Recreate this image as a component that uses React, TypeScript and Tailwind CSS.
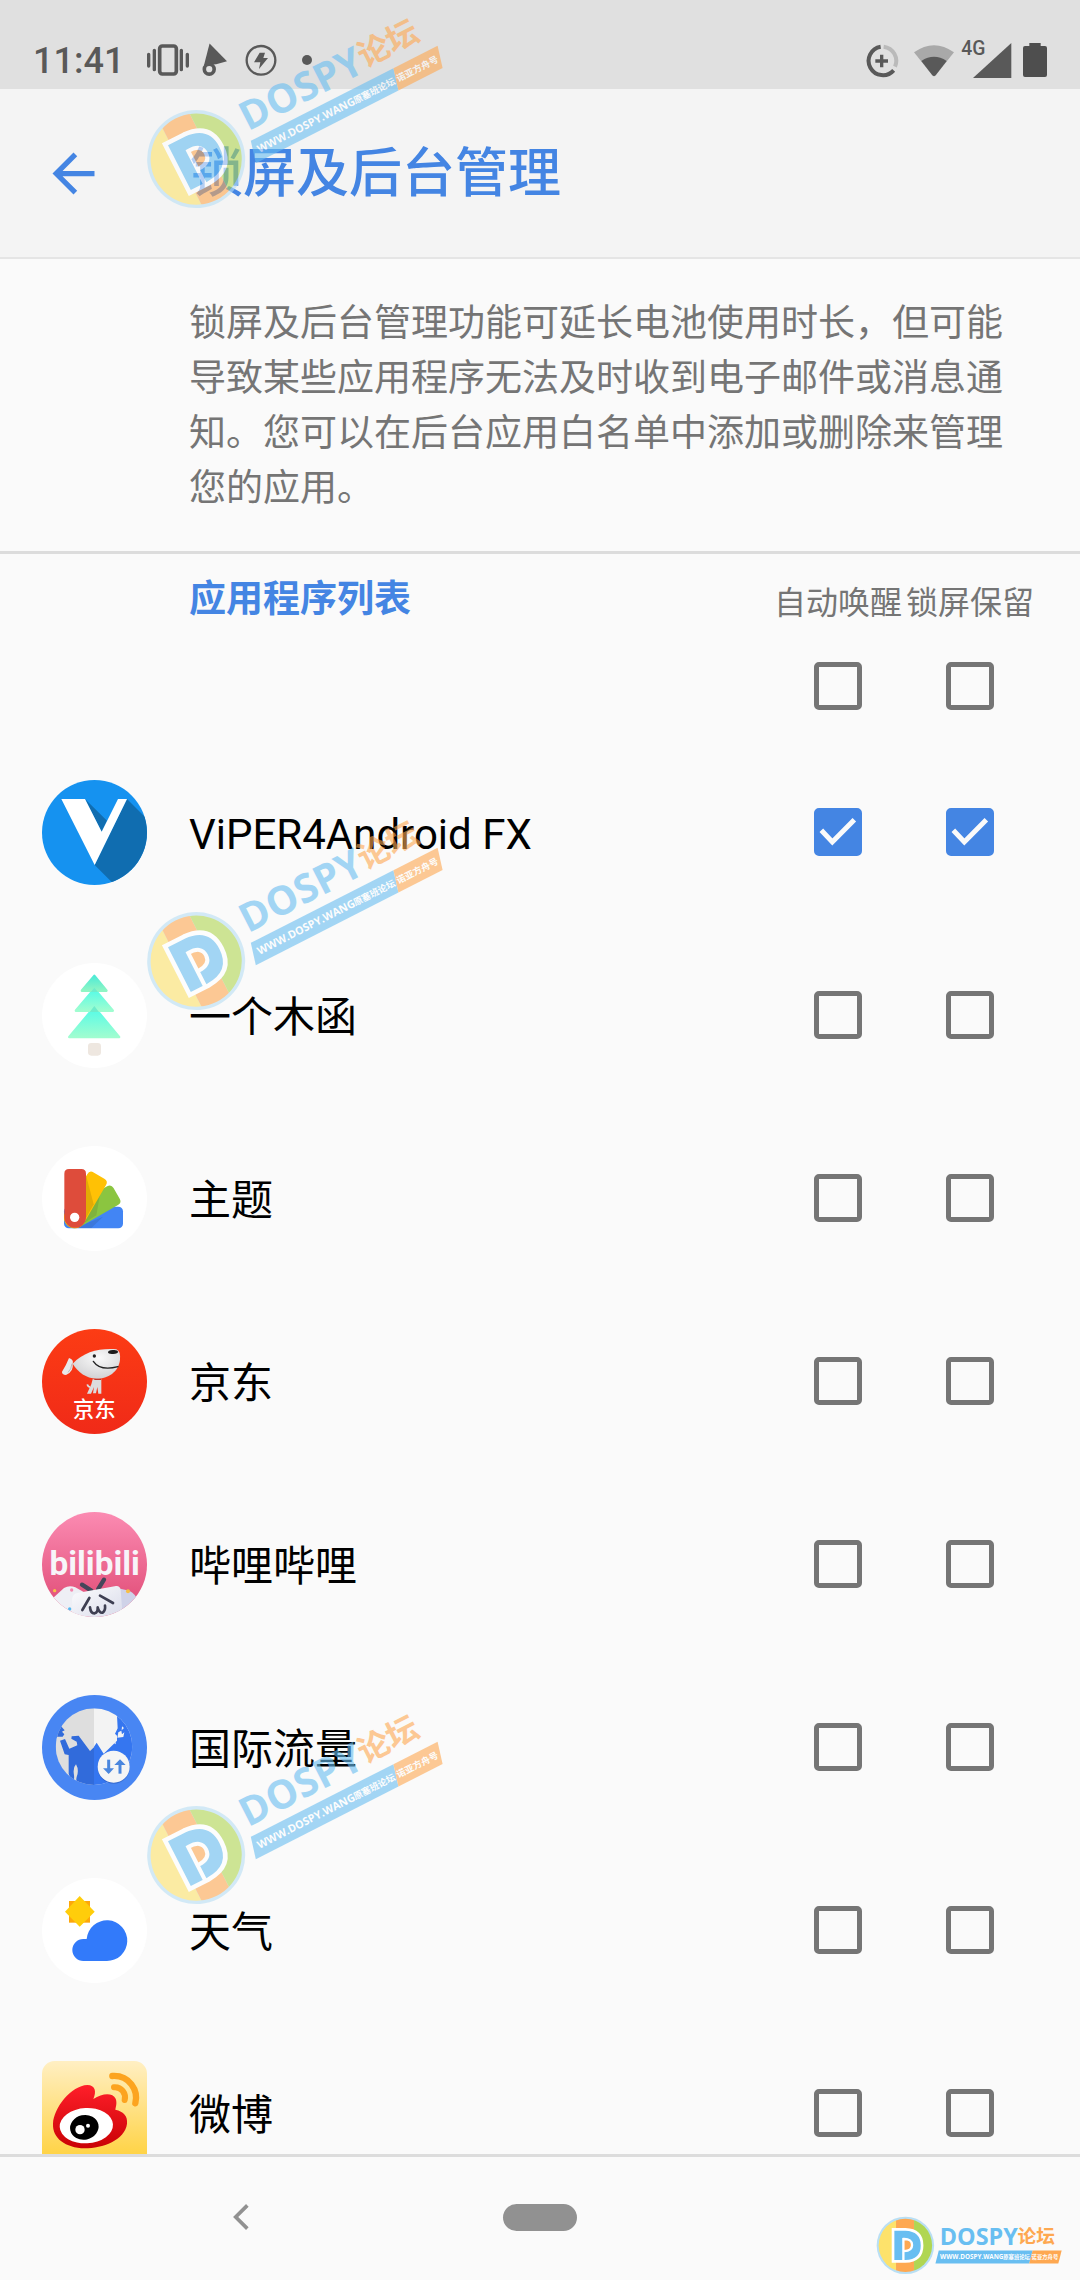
import { useState, type ReactNode } from "react";

// ── アプリアイコン（315 x 315 の座標で描く）──
function IconFrame({ children }: { children: ReactNode }) {
  return (
    <svg viewBox="0 0 315 315" className="block size-[105px] shrink-0" aria-hidden="true">
      {children}
    </svg>
  );
}

function ViperIcon() {
  return (
    <IconFrame>
      <clipPath id="viper-clip">
        <circle cx="157.5" cy="157.5" r="157.5" />
      </clipPath>
      <g clipPath="url(#viper-clip)">
        <rect width="315" height="315" fill="#1592f0" />
        <path d="M129 57 195 122 179 155ZM255 57 330 132V330H233L158 255Z" fill="#106db0" />
        <path d="M58 57H129L179 155 228 57H255L158 255Z" fill="#fff" />
      </g>
    </IconFrame>
  );
}

function TreeIcon() {
  return (
    <IconFrame>
      <defs>
        <linearGradient id="tree-a" x1="0" y1="0" x2="0" y2="1">
          <stop offset="0" stopColor="#4eebd6" />
          <stop offset="1" stopColor="#8ff5c4" />
        </linearGradient>
        <linearGradient id="tree-b" x1="0" y1="0" x2="0" y2="1">
          <stop offset="0" stopColor="#52fbe8" />
          <stop offset="1" stopColor="#a0fdd0" />
        </linearGradient>
      </defs>
      <circle cx="157.5" cy="157.5" r="157.5" fill="#fff" />
      <g strokeWidth="8" strokeLinejoin="round">
        <path d="M157 133 231 222H82Z" fill="url(#tree-b)" stroke="url(#tree-b)" />
        <path d="M157 78 212 143H102Z" fill="url(#tree-b)" stroke="url(#tree-b)" />
        <path d="M157 39 193 83H120Z" fill="url(#tree-a)" stroke="url(#tree-a)" />
      </g>
      <path d="M157 129 171 147H143ZM157 74 168 87H146Z" fill="#6eeccb" />
      <rect x="138" y="240" width="39" height="38" rx="10" fill="#eee7e0" />
    </IconFrame>
  );
}

function ThemeIcon() {
  return (
    <IconFrame>
      <circle cx="157.5" cy="157.5" r="157.5" fill="#fff" />
      <rect x="66" y="69" width="65" height="177" rx="14" fill="#4285f4" transform="rotate(90 98 214)" />
      <path d="M183 212 148 246H98Z" fill="#3c78db" />
      <path d="M66 83q0-14 14-14h37q14 0 14 14V214a32 32 0 0 1-65 0Z" fill="#8bc540" transform="rotate(60 98 214)" />
      <path d="M175 140 163 208 116 238Z" fill="#7fb33c" />
      <path d="M66 83q0-14 14-14h37q14 0 14 14V214a32 32 0 0 1-65 0Z" fill="#ffc105" transform="rotate(30 98 214)" />
      <path d="M132 88 155 175 122 233Z" fill="#e3ab05" />
      <path d="M67 83q0-14 14-14h37q14 0 14 14V213a32 32 0 0 1-65 0Z" fill="#de4c3b" />
      <circle cx="98" cy="214" r="14" fill="#fff" />
    </IconFrame>
  );
}

function JdIcon() {
  return (
    <IconFrame>
      <defs>
        <linearGradient id="jd-bg" x1="0" y1="0" x2="0" y2="1">
          <stop offset="0" stopColor="#fc3c14" />
          <stop offset="1" stopColor="#f02a18" />
        </linearGradient>
        <radialGradient id="jd-head" cx=".55" cy=".3" r=".75">
          <stop offset="0" stopColor="#fafafa" />
          <stop offset="1" stopColor="#cfcfd1" />
        </radialGradient>
      </defs>
      <circle cx="157.5" cy="157.5" r="157.5" fill="url(#jd-bg)" />
      <path d="M139 168q6 8 4 13M152 151h26v43h-9l-3-20-4 19h-9l3-19-9 20h-12l13-28Z" fill="#dcdcde" />
      <path d="M136 166q1 7 8 8" stroke="#dcdcde" strokeWidth="5" fill="none" />
      <path d="M92 104C125 68 175 57 223 61Q236 66 234 92C230 130 195 150 163 149 132 147 109 131 92 104Z" fill="url(#jd-head)" />
      <path d="M81 87Q96 92 92 104 96 127 72 138 59 136 60 128 72 110 81 87Z" fill="#e8e8ea" />
      <path d="M90 104Q88 122 78 130" stroke="#bdbdbf" strokeWidth="3" fill="none" />
      <ellipse cx="213" cy="69" rx="15" ry="6" fill="#1c1a1a" transform="rotate(-4 213 69)" />
      <circle cx="157" cy="81" r="5" fill="#222" />
      <path d="M154 97Q174 127 228 113" stroke="#222" strokeWidth="4" strokeLinecap="round" fill="none" />
      <path d="M157 151h20" stroke="#b51d13" strokeWidth="3" />
      <text x="157" y="263" textAnchor="middle" fontSize="64" fill="#fff" className="font-['Noto_Sans_CJK_SC',sans-serif] font-medium">
        京东
      </text>
    </IconFrame>
  );
}

function BilibiliIcon() {
  return (
    <IconFrame>
      <defs>
        <linearGradient id="bili-bg" x1="0" y1="0" x2="0" y2="1">
          <stop offset="0" stopColor="#fb8bb2" />
          <stop offset=".8" stopColor="#e4557f" />
        </linearGradient>
        <linearGradient id="bili-tv" x1="0" y1="0" x2="1" y2="1">
          <stop offset="0" stopColor="#fdfdfe" />
          <stop offset="1" stopColor="#d9dbea" />
        </linearGradient>
        <clipPath id="bili-clip">
          <circle cx="157.5" cy="157.5" r="157.5" />
        </clipPath>
      </defs>
      <g clipPath="url(#bili-clip)">
        <rect width="315" height="315" fill="url(#bili-bg)" />
        <path d="M20 270 66 228Q82 218 100 226L125 240V315H20Z" fill="#eeeff5" />
        <path d="M225 228 262 236Q282 246 290 270L250 315H225Z" fill="#cfd2e8" />
        <g stroke="#45465a" strokeWidth="13" strokeLinecap="round">
          <path d="M120 218 148 236" />
          <path d="M186 203 168 232" />
        </g>
        <path d="M90 262Q92 246 106 243L222 222Q234 221 236 234L242 315H92Z" fill="url(#bili-tv)" />
        <g stroke="#3e3f52" strokeWidth="8" strokeLinecap="round" strokeLinejoin="round" fill="none">
          <path d="M142 258 121 294M174 251 213 273" />
          <path d="M144 286Q146 305 158 304 168 301 167 286 172 304 182 302 191 296 189 281" />
        </g>
        <circle cx="38" cy="236" r="5" fill="#f6bf45" />
        <circle cx="89" cy="234" r="5" fill="#f58ab0" />
        <circle cx="258" cy="238" r="6" fill="#f6bf45" />
        <circle cx="83" cy="291" r="5" fill="#56b7ee" />
        <text x="158" y="190" textAnchor="middle" fontSize="100" fill="#f7f5f9" className="font-['Liberation_Sans_Narrow',Roboto,sans-serif] font-bold">
          bilibili
        </text>
      </g>
    </IconFrame>
  );
}

function RoamingIcon() {
  return (
    <IconFrame>
      <defs>
        <clipPath id="roam-left">
          <path d="M156 40A115 115 0 0 0 156 270Z" />
        </clipPath>
        <clipPath id="roam-right">
          <path d="M156 40A115 115 0 0 1 156 270Z" />
        </clipPath>
      </defs>
      <circle cx="157.5" cy="157.5" r="157.5" fill="#4886f3" />
      <g clipPath="url(#roam-left)">
        <rect width="315" height="315" fill="#dedede" />
        <path d="M54 137 69 132 82 161 106 151 104 140 88 131 89 124 110 122 144 168 156 157V272H110Q100 262 104 246 112 225 102 208 92 218 96 240 98 258 90 262L80 236V180L68 178Z" fill="#316bdb" />
        <path d="M56 92 68 106 60 110 67 118 62 125H42V92Z" fill="#316bdb" />
      </g>
      <g clipPath="url(#roam-right)">
        <rect width="315" height="315" fill="#f3f3f3" />
        <path d="M225 62H290V280H156V155L164 143 185 176 225 137V122L219 116 227 100Z" fill="#3576f0" />
        <path d="M240 94 246 99 239 106ZM229 112 238 107 240 118 247 112 244 126 226 128Z" fill="#f3f3f3" />
        <path d="M215 143 221 141 221 148Z" fill="#f3f3f3" />
      </g>
      <circle cx="215" cy="218" r="48" fill="#1f4ba8" opacity=".45" />
      <circle cx="215" cy="215" r="48" fill="#f5f5f5" />
      <g stroke="#4a86de" strokeWidth="9" fill="none">
        <path d="M200 194V232" />
        <path d="M234 236V198" />
      </g>
      <path d="M183 220H216L200 237ZM217 210H251L234 193Z" fill="#4a86de" />
    </IconFrame>
  );
}

function WeatherIcon() {
  return (
    <IconFrame>
      <circle cx="157.5" cy="157.5" r="157.5" fill="#fff" />
      <rect x="81" y="69" width="63" height="65" fill="#fda70c" />
      <path d="M113 54 158 101 113 146 69 101Z" fill="#ffcd0b" />
      <path d="M124 183H134A61 61 0 1 1 194 249H124A33 33 0 0 1 124 183Z" fill="#327afa" />
    </IconFrame>
  );
}

function WeiboIcon() {
  return (
    <IconFrame>
      <defs>
        <linearGradient id="wb-bg" x1="0" y1="0" x2="0" y2="1">
          <stop offset="0" stopColor="#ffefc3" />
          <stop offset=".9" stopColor="#ffd345" />
        </linearGradient>
        <linearGradient id="wb-red" x1="0" y1="0" x2="0" y2="1">
          <stop offset="0" stopColor="#ff1f2a" />
          <stop offset="1" stopColor="#c90205" />
        </linearGradient>
      </defs>
      <rect width="315" height="315" rx="38" fill="url(#wb-bg)" />
      <path
        d="M33 188C35 140 88 74 136 72 160 72 164 92 154 114 182 96 212 95 221 113 226 126 221 138 220 146 246 152 257 165 255 188 249 237 182 262 128 262 70 260 31 232 33 188Z"
        fill="url(#wb-red)"
      />
      <ellipse cx="133" cy="194" rx="80" ry="53" fill="#fff" transform="rotate(-3 133 194)" />
      <ellipse cx="127" cy="199" rx="43" ry="37" fill="#000" transform="rotate(-12 127 199)" />
      <circle cx="114" cy="206" r="14" fill="#fff" />
      <circle cx="138" cy="194" r="6" fill="#fff" />
      <g stroke="#fca420" fill="none" strokeLinecap="round">
        <path d="M211 45C262 42 290 88 280 127" strokeWidth="19" />
        <path d="M216 79C238 77 253 97 248 117" strokeWidth="18" />
      </g>
    </IconFrame>
  );
}

// ── ステータスバー ──
function StatusBar() {
  return (
    <div className="flex h-[89px] shrink-0 items-end justify-between bg-[#e0e0e0] px-[33px] pb-[11px] text-[#595959]">
      <div className="flex items-center">
        <span className="mr-[23px] pt-[2px] text-[36px] leading-[34px] font-medium">11:41</span>
        <svg viewBox="0 0 126 102" className="mr-[13px] h-[34px] w-[42px]" aria-label="振动">
          <rect x="38" y="9" width="50" height="84" rx="8" fill="none" stroke="currentColor" strokeWidth="11" />
          <path d="M5 34V69M22 22V80M103 22V80M121 34V69" stroke="currentColor" strokeWidth="10" strokeLinecap="round" fill="none" />
        </svg>
        <svg viewBox="0 0 76 102" className="mr-[18px] h-[34px] w-[25px]" aria-hidden="true">
          <path d="M23 1 76 55 43 64 6 67Z" fill="currentColor" />
          <circle cx="22" cy="79" r="15" fill="#e0e0e0" stroke="currentColor" strokeWidth="11" />
        </svg>
        <svg viewBox="0 0 96 102" className="mr-[25px] h-[34px] w-[32px]" aria-hidden="true">
          <circle cx="48" cy="52" r="43" fill="none" stroke="currentColor" strokeWidth="7" />
          <path d="M44 29H60L55 45H69L42 78 46 58H27Z" fill="currentColor" />
        </svg>
        <span className="size-[10px] rounded-full bg-current" />
      </div>
      <div className="flex items-end">
        <svg viewBox="0 0 102 102" className="mr-[15px] size-[34px]" aria-label="流量节省">
          <g fill="none" strokeWidth="12">
            <path d="M56 8A43 43 0 0 1 90 68" stroke="#bababa" />
            <path d="M47 8A43 43 0 1 0 86 79" stroke="currentColor" />
          </g>
          <path d="M50 32V70M31 51H69" stroke="currentColor" strokeWidth="10" />
        </svg>
        <svg viewBox="0 0 120 102" className="mr-[7px] h-[34px] w-[40px]" aria-label="Wi-Fi">
          <path d="M0 25Q60-18 120 25L65 94Q60 99 55 94Z" fill="#a9a9a9" />
          <path d="M22 51Q60 26 98 51L65 94Q60 99 55 94Z" fill="currentColor" />
        </svg>
        <svg viewBox="0 0 153 135" className="mr-[11px] h-[45px] w-[51px]" aria-label="4G 信号">
          <path d="M151 30V135H36Z" fill="currentColor" />
          <text x="1" y="67" fontSize="58" fill="currentColor" className="font-[Roboto,sans-serif] font-medium">
            4G
          </text>
        </svg>
        <svg viewBox="0 0 72 102" className="mb-px h-[34px] w-[24px]" aria-label="电池">
          <path d="M19 0H53V9H66Q72 9 72 15V96Q72 102 66 102H6Q0 102 0 96V15Q0 9 6 9H19Z" fill="#4e4e4e" />
        </svg>
      </div>
    </div>
  );
}

// ── 論壇ロゴ ──
function ForumLogo({ id, className }: { id: string; className: string }) {
  return (
    <svg viewBox="0 0 560 175" className={`pointer-events-none absolute overflow-visible ${className}`} aria-hidden="true">
      <clipPath id={id}>
        <circle cx="88" cy="88" r="80" />
      </clipPath>
      <circle cx="88" cy="88" r="86" fill="#b9dff4" />
      <g clipPath={`url(#${id})`}>
        <rect width="60" height="175" fill="#fde26b" />
        <rect x="60" width="54" height="175" fill="#fea851" />
        <rect x="114" width="61" height="175" fill="#b0d652" />
      </g>
      <path d="M51 40H88Q138 42 138 88 138 134 88 136H51Z" fill="#68bef1" stroke="#fff" strokeWidth="8" />
      <path d="M82 71H84Q106 72 106 87 106 102 86 103H82Z" fill="#fea851" />
      <path d="M82 136V69Q108 68 108 87 108 105 84 105" fill="none" stroke="#fff" strokeWidth="7" />
      <text x="191" y="86" fontSize="70" fill="#68bef1" className="font-['Open_Sans',sans-serif] font-bold">
        DOSPY
      </text>
      <text x="424" y="80" fontSize="56" fill="#fea851" className="font-['Noto_Sans_CJK_SC',sans-serif] font-bold">
        论坛
      </text>
      <path d="M188 103H469L459 142H178Z" fill="#68bef1" />
      <path d="M469 103H556L546 142H459Z" fill="#fea851" />
      <g fill="#fff" className="font-['Open_Sans','Noto_Sans_CJK_SC',sans-serif] font-bold">
        <text x="192" y="129" fontSize="19">WWW.DOSPY.WANG</text>
        <text x="381" y="129" fontSize="16">原塞班论坛</text>
        <text x="466" y="129" fontSize="16">诺亚方舟号</text>
      </g>
    </svg>
  );
}

function CheckBox({ label, checked, onChange }: { label: string; checked: boolean; onChange: () => void }) {
  return (
    <label className="grid place-items-center">
      <input
        type="checkbox"
        aria-label={label}
        checked={checked}
        onChange={onChange}
        className="peer col-start-1 row-start-1 size-12 appearance-none rounded-[5px] border-[5px] border-[#757575] checked:border-[#4485e3] checked:bg-[#4485e3]"
      />
      <svg viewBox="0 0 144 144" className="invisible col-start-1 row-start-1 size-12 peer-checked:visible" aria-hidden="true">
        <path d="M22 67 55 102 121 35" fill="none" stroke="#fafafa" strokeWidth="15" />
      </svg>
    </label>
  );
}

type AppItem = { name: string; icon: ReactNode; wake: boolean; keep: boolean };

const APPS: AppItem[] = [
  { name: "ViPER4Android FX", icon: <ViperIcon />, wake: true, keep: true },
  { name: "一个木函", icon: <TreeIcon />, wake: false, keep: false },
  { name: "主题", icon: <ThemeIcon />, wake: false, keep: false },
  { name: "京东", icon: <JdIcon />, wake: false, keep: false },
  { name: "哔哩哔哩", icon: <BilibiliIcon />, wake: false, keep: false },
  { name: "国际流量", icon: <RoamingIcon />, wake: false, keep: false },
  { name: "天气", icon: <WeatherIcon />, wake: false, keep: false },
  { name: "微博", icon: <WeiboIcon />, wake: false, keep: false },
];

type Column = "wake" | "keep";
const COLUMNS: { key: Column; label: string }[] = [
  { key: "wake", label: "自动唤醒" },
  { key: "keep", label: "锁屏保留" },
];

export default function App() {
  const [apps, setApps] = useState(APPS);

  const toggle = (i: number, key: Column) =>
    setApps((list) => list.map((a, n) => (n === i ? { ...a, [key]: !a[key] } : a)));

  const toggleAll = (key: Column) =>
    setApps((list) => {
      const next = !list.every((a) => a[key]);
      return list.map((a) => ({ ...a, [key]: next }));
    });

  return (
    <div className="relative flex h-screen flex-col overflow-hidden bg-[#fafafa] font-[Roboto,'Noto_Sans_CJK_SC',sans-serif]">
      <StatusBar />

      {/* 标题栏 */}
      <header className="flex h-[170px] shrink-0 items-center border-b-2 border-[#e5e5e5] bg-[#f4f4f4] pl-[42px] text-[#4485e3]">
        <button type="button" aria-label="返回" className="mr-[85px]">
          <svg viewBox="0 0 24 24" className="size-[63px]" aria-hidden="true">
            <path d="M20 11H7.83l5.59-5.59L12 4l-8 8 8 8 1.41-1.41L7.83 13H20v-2z" fill="currentColor" />
          </svg>
        </button>
        <h1 className="pt-[2px] text-[53px] leading-[64px] font-medium">锁屏及后台管理</h1>
      </header>

      <p className="shrink-0 border-b-[3px] border-[#dcdcdc] pt-[37px] pr-[70px] pb-[35px] pl-[189px] text-[37px] leading-[55px] text-[#757575]">
        锁屏及后台管理功能可延长电池使用时长，但可能导致某些应用程序无法及时收到电子邮件或消息通知。您可以在后台应用白名单中添加或删除来管理您的应用。
      </p>

      <main className="min-h-0 flex-1 overflow-y-auto [scrollbar-width:none]">
        <div className="flex items-start justify-between pr-[46px] pb-[31px] pl-[189px]">
          <h2 className="pt-[18px] text-[37px] leading-[55px] font-bold text-[#4485e3]">应用程序列表</h2>
          <div className="grid grid-cols-[128px_128px] gap-x-1 gap-y-[37px] pt-[27px]">
            {COLUMNS.map((c) => (
              <span key={c.key} className="text-[32px] leading-[44px] whitespace-nowrap text-[#757575]">
                {c.label}
              </span>
            ))}
            {COLUMNS.map((c) => (
              <CheckBox key={c.key} label={`全部${c.label}`} checked={apps.every((a) => a[c.key])} onChange={() => toggleAll(c.key)} />
            ))}
          </div>
        </div>

        <ul>
          {apps.map((app, i) => (
            <li key={app.name} className="flex h-[183px] items-center pr-[46px] pl-[42px]">
              {app.icon}
              <span className="ml-[42px] flex-1 pt-1 text-[42px] leading-[56px] text-black">{app.name}</span>
              <div className="grid grid-cols-[128px_128px] gap-x-1 pb-px">
                {COLUMNS.map((c) => (
                  <CheckBox key={c.key} label={`${app.name} ${c.label}`} checked={app[c.key]} onChange={() => toggle(i, c.key)} />
                ))}
              </div>
            </li>
          ))}
        </ul>
      </main>

      {/* 导航栏 */}
      <nav className="grid h-[126px] shrink-0 grid-cols-[1fr_74px_1fr] items-center border-t-[3px] border-[#dcdcdc] pb-[3px]">
        <button type="button" aria-label="后退" className="mr-[22px] justify-self-center text-[#919191]">
          <svg viewBox="0 0 48 78" className="h-[26px] w-[16px]" aria-hidden="true">
            <path d="M43 4 8 39 43 74" fill="none" stroke="currentColor" strokeWidth="11" />
          </svg>
        </button>
        <button type="button" aria-label="主屏幕" className="h-[27px] rounded-full bg-[#919191]" />
      </nav>

      <ForumLogo id="logo-1" className="top-[109px] left-[146px] w-[319px] origin-[50px_50px] -rotate-27 opacity-60" />
      <ForumLogo id="logo-2" className="top-[911px] left-[146px] w-[319px] origin-[50px_50px] -rotate-27 opacity-60" />
      <ForumLogo id="logo-3" className="top-[1805px] left-[146px] w-[319px] origin-[50px_50px] -rotate-27 opacity-60" />
      <ForumLogo id="logo-4" className="right-[17px] bottom-[6px] w-[187px]" />
    </div>
  );
}
